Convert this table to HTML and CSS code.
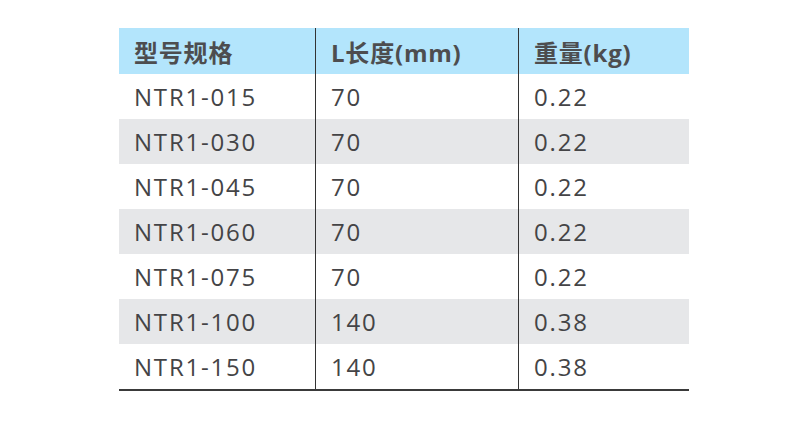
FILE: index.html
```html
<!DOCTYPE html>
<html lang="zh">
<head>
<meta charset="utf-8">
<link rel="stylesheet" href="styles.css">
</head>
<body>
<table class="spec">
  <thead>
    <tr><th>型号规格</th><th>L长度(mm)</th><th>重量(kg)</th></tr>
  </thead>
  <tbody>
    <tr><td>NTR1-015</td><td>70</td><td>0.22</td></tr>
    <tr class="alt"><td>NTR1-030</td><td>70</td><td>0.22</td></tr>
    <tr><td>NTR1-045</td><td>70</td><td>0.22</td></tr>
    <tr class="alt"><td>NTR1-060</td><td>70</td><td>0.22</td></tr>
    <tr><td>NTR1-075</td><td>70</td><td>0.22</td></tr>
    <tr class="alt"><td>NTR1-100</td><td>140</td><td>0.38</td></tr>
    <tr><td>NTR1-150</td><td>140</td><td>0.38</td></tr>
  </tbody>
</table>
</body>
</html>
```
FILE: styles.css
```css
html, body {
  margin: 0;
  padding: 0;
  background: #ffffff;
}
body {
  padding: 28px 0 0 119px;
  font-family: "Open Sans", "Noto Sans CJK SC", sans-serif;
  color: #444446;
}
.spec {
  border-collapse: collapse;
  width: 570px;
  table-layout: fixed;
  border-bottom: 2px solid #3a3a3a;
}
.spec th, .spec td {
  padding: 0 0 0 15px;
  text-align: left;
  vertical-align: middle;
  border-left: 1px solid #333;
  white-space: nowrap;
}
.spec th:first-child, .spec td:first-child {
  border-left: none;
  width: 181px;
}
.spec th:nth-child(2), .spec td:nth-child(2) {
  width: 187px;
}
.spec th {
  height: 46px;
  background: #b3e5fc;
  font-size: 24px;
  font-weight: bold;
  color: #4d4d4f;
  letter-spacing: 0.8px;
}
.spec td {
  height: 45px;
  font-size: 24px;
  letter-spacing: 1.8px;
}
.spec tr.alt td {
  background: #e6e7e9;
}
```
